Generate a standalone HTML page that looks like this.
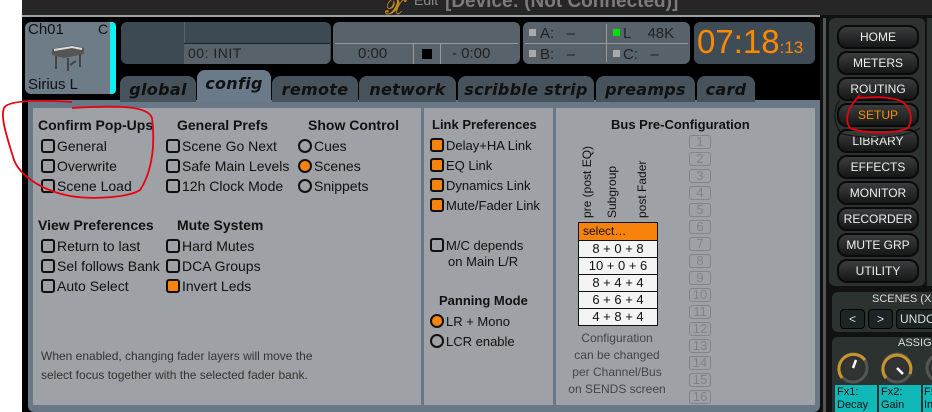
<!DOCTYPE html>
<html><head><meta charset="utf-8"><style>
*{box-sizing:border-box;margin:0;padding:0}
body{width:932px;height:412px;overflow:hidden;background:#fff;position:relative;font-family:"Liberation Sans","DejaVu Sans",sans-serif}
.a{position:absolute}
.frame{left:22px;top:0;width:806px;height:412px;background:#000}
.topbar{left:22px;top:0;width:910px;height:15px;background:#262626}
.tline{left:22px;top:15px;width:806px;height:2px;background:#9aa0a6}
.box{position:absolute;border-radius:6px}
.tab{position:absolute;top:72px;height:28px;background:#46525c;border-radius:8px 8px 0 0;font:italic bold 16px "DejaVu Sans",sans-serif;color:#111;text-align:center;line-height:28px;letter-spacing:.3px;white-space:nowrap;overflow:hidden}
.panel{left:28px;top:100px;width:792px;height:312px;background:#687886;border-radius:0 0 6px 6px}
.inner{left:33px;top:108px;width:782px;height:297px;background:#9ea1a6}
.sep{position:absolute;top:108px;width:3px;height:297px;background:#687886}
.h{position:absolute;font-weight:bold;font-size:14px;color:#111}
.it{position:absolute;font-size:14px;color:#111;white-space:nowrap}
.cb{display:inline-block;width:14px;height:14px;border:2px solid #111;border-radius:3px;vertical-align:-2px;margin-right:2px;background:transparent}
.cb.on{background:#f7830c}
.rb{display:inline-block;width:14px;height:14px;border:2px solid #111;border-radius:50%;vertical-align:-2px;margin-right:2px}
.rb.on{background:#f7830c}
.btn{position:absolute;left:837px;width:82px;height:24px;border-radius:10px;background:linear-gradient(#3a3d3d,#161818);border:2px solid #0a0a0a;color:#eee;font-size:12px;text-align:center;line-height:20px}
.num{position:absolute;left:689px;width:22px;height:14px;border:1px solid #7f8489;border-radius:3px;color:#7f8489;font-size:13px;line-height:12px;text-align:center}
.row{height:17px;border-top:1px solid #111;background:#f4f4f4;font-size:13px;text-align:center;line-height:16px;color:#111}
</style></head><body>
<div class="a frame"></div>
<div class="a topbar"></div>
<div class="a" style="left:385px;top:-6px;font-size:22px;color:#c58a1c">𝓧</div>
<div class="a" style="left:414px;top:-8px;font-size:14px;color:#8a8a8a">Edit</div>
<div class="a" style="left:445px;top:-9px;font-size:19px;font-weight:bold;color:#7c7c7c">[Device: (Not Connected)]</div>
<div class="a tline"></div>

<div class="box" style="left:25px;top:22px;width:91px;height:72px;background:#6e7c88"></div>
<div class="a" style="left:110px;top:22px;width:6px;height:72px;background:#10f0f0;border-radius:0 4px 4px 0"></div>
<div class="a" style="left:28px;top:21px;font-size:15px;color:#111">Ch01</div>
<div class="a" style="left:98px;top:21px;font-size:14px;color:#111">C</div>
<svg class="a" style="left:50px;top:41px" width="40" height="32"><path d="M2 8 L22 4 L34 7 L34 13 L14 17 L2 14Z" fill="#555"/><path d="M4 9 L22 6 L32 8" stroke="#ddd" stroke-width="2" fill="none"/><path d="M6 15 L6 28 M30 13 L30 26 M18 17 L18 30 M20 24 L26 20" stroke="#444" stroke-width="2"/></svg>
<div class="a" style="left:28px;top:76px;font-size:15px;color:#111">Sirius L</div>

<div class="box" style="left:121px;top:22px;width:210px;height:42px;background:#3d4a54"></div>
<div class="a" style="left:184px;top:22px;width:1px;height:42px;background:#58626a"></div>
<div class="a" style="left:184px;top:43px;width:146px;height:21px;background:#58626a;border-radius:0 0 6px 0;border-top:1px solid #222"></div>
<div class="a" style="left:188px;top:45px;font-size:14px;color:#222;letter-spacing:.5px">00: INIT</div>
<div class="box" style="left:333px;top:22px;width:187px;height:42px;background:#58626a"></div>
<div class="a" style="left:335px;top:43px;width:183px;height:1px;background:#999"></div>
<div class="a" style="left:413px;top:44px;width:1px;height:20px;background:#999"></div>
<div class="a" style="left:440px;top:44px;width:1px;height:20px;background:#999"></div>
<div class="a" style="left:358px;top:45px;font-size:15px;color:#222">0:00</div>
<div class="a" style="left:422px;top:49px;width:10px;height:10px;background:#000"></div>
<div class="a" style="left:452px;top:45px;font-size:15px;color:#222">- 0:00</div>
<div class="box" style="left:523px;top:22px;width:167px;height:42px;background:#58626a"></div>
<div class="a" style="left:525px;top:43px;width:163px;height:1px;background:#999"></div>
<div class="a" style="left:606px;top:24px;width:1px;height:38px;background:#999"></div>
<div class="a" style="left:529px;top:29px;width:7px;height:7px;background:#aaa"></div>
<div class="a" style="left:529px;top:50px;width:7px;height:7px;background:#aaa"></div>
<div class="a" style="left:613px;top:29px;width:7px;height:7px;background:#00e000"></div>
<div class="a" style="left:613px;top:50px;width:7px;height:7px;background:#aaa"></div>
<div class="a" style="left:540px;top:25px;font-size:15px;color:#222">A: &nbsp; –</div>
<div class="a" style="left:540px;top:46px;font-size:15px;color:#222">B: &nbsp; –</div>
<div class="a" style="left:623px;top:25px;font-size:15px;color:#222">L &nbsp;&nbsp; 48K</div>
<div class="a" style="left:623px;top:46px;font-size:15px;color:#222">C: &nbsp; –</div>
<div class="box" style="left:694px;top:22px;width:121px;height:42px;background:#3f4c56"></div>
<div class="a" style="left:697px;top:24px;font-size:33px;color:#ff8a00;line-height:36px">07:18<span style="font-size:17px">:13</span></div>

<div class="a panel"></div>
<div class="tab" style="left:120px;width:76px;top:76px;height:26px">global</div>
<div class="tab" style="left:197px;width:74px;top:70px;height:32px;background:#6a7a88;line-height:28px">config</div>
<div class="tab" style="left:272px;width:86px;top:76px;height:26px">remote</div>
<div class="tab" style="left:359px;width:97px;top:76px;height:26px">network</div>
<div class="tab" style="left:458px;width:136px;top:76px;height:26px">scribble strip</div>
<div class="tab" style="left:596px;width:99px;top:76px;height:26px">preamps</div>
<div class="tab" style="left:697px;width:58px;top:76px;height:26px">card</div>

<div class="a inner"></div>
<div class="sep" style="left:421px"></div>
<div class="sep" style="left:553px"></div>

<div class="h" style="left:38px;top:117px">Confirm Pop-Ups</div>
<div class="it" style="left:41px;top:138px"><span class="cb"></span>General</div>
<div class="it" style="left:41px;top:158px"><span class="cb"></span>Overwrite</div>
<div class="it" style="left:41px;top:178px"><span class="cb"></span>Scene Load</div>
<div class="h" style="left:177px;top:117px">General Prefs</div>
<div class="it" style="left:166px;top:138px"><span class="cb"></span>Scene Go Next</div>
<div class="it" style="left:166px;top:158px"><span class="cb"></span>Safe Main Levels</div>
<div class="it" style="left:166px;top:178px"><span class="cb"></span>12h Clock Mode</div>
<div class="h" style="left:308px;top:117px">Show Control</div>
<div class="it" style="left:298px;top:138px"><span class="rb"></span>Cues</div>
<div class="it" style="left:298px;top:158px"><span class="rb on"></span>Scenes</div>
<div class="it" style="left:298px;top:178px"><span class="rb"></span>Snippets</div>
<div class="h" style="left:38px;top:217px">View Preferences</div>
<div class="it" style="left:41px;top:238px"><span class="cb"></span>Return to last</div>
<div class="it" style="left:41px;top:258px"><span class="cb"></span>Sel follows Bank</div>
<div class="it" style="left:41px;top:278px"><span class="cb"></span>Auto Select</div>
<div class="h" style="left:177px;top:217px">Mute System</div>
<div class="it" style="left:166px;top:238px"><span class="cb"></span>Hard Mutes</div>
<div class="it" style="left:166px;top:258px"><span class="cb"></span>DCA Groups</div>
<div class="it" style="left:166px;top:278px"><span class="cb on"></span>Invert Leds</div>
<div class="a" style="left:41px;top:347px;font-size:12px;line-height:19px;color:#333">When enabled, changing fader layers will move the<br>select focus together with the selected fader bank.</div>

<div class="h" style="left:432px;top:117px;font-size:13px">Link Preferences</div>
<div class="it" style="left:430px;top:138px;font-size:13px"><span class="cb on"></span>Delay+HA Link</div>
<div class="it" style="left:430px;top:158px;font-size:13px"><span class="cb on"></span>EQ Link</div>
<div class="it" style="left:430px;top:178px;font-size:13px"><span class="cb on"></span>Dynamics Link</div>
<div class="it" style="left:430px;top:198px;font-size:13px"><span class="cb on"></span>Mute/Fader Link</div>
<div class="it" style="left:430px;top:238px;font-size:13px;line-height:16px"><span class="cb"></span>M/C depends<br>&nbsp;&nbsp;&nbsp;&nbsp;&nbsp;on Main L/R</div>
<div class="h" style="left:439px;top:293px;font-size:13px">Panning Mode</div>
<div class="it" style="left:430px;top:314px;font-size:13px"><span class="rb on"></span>LR + Mono</div>
<div class="it" style="left:430px;top:334px;font-size:13px"><span class="rb"></span>LCR enable</div>

<div class="h" style="left:611px;top:117px;font-size:13px">Bus Pre-Configuration</div>
<div class="a" style="left:580px;top:218px;transform:rotate(-90deg);transform-origin:0 0;font-size:12px;color:#111;white-space:nowrap">pre (post EQ)</div>
<div class="a" style="left:605px;top:218px;transform:rotate(-90deg);transform-origin:0 0;font-size:12px;color:#111;white-space:nowrap">Subgroup</div>
<div class="a" style="left:635px;top:218px;transform:rotate(-90deg);transform-origin:0 0;font-size:12px;color:#111;white-space:nowrap">post Fader</div>
<div class="a" style="left:578px;top:222px;width:80px;border:1px solid #111;background:#f4f4f4">
<div style="height:17px;background:#f7830c;font-size:12px;line-height:17px;padding-left:4px;color:#111">select…</div>
<div class="row">8 + 0 + 8</div><div class="row">10 + 0 + 6</div><div class="row">8 + 4 + 4</div><div class="row">6 + 6 + 4</div><div class="row">4 + 8 + 4</div>
</div>
<div class="a" style="left:557px;top:330px;width:120px;text-align:center;font-size:12px;line-height:17px;color:#444">Configuration<br>can be changed<br>per Channel/Bus<br>on SENDS screen</div>
<div class="num" style="top:135px">1</div><div class="num" style="top:152px">2</div><div class="num" style="top:169px">3</div><div class="num" style="top:186px">4</div><div class="num" style="top:203px">5</div><div class="num" style="top:220px">6</div><div class="num" style="top:237px">7</div><div class="num" style="top:254px">8</div><div class="num" style="top:271px">9</div><div class="num" style="top:288px">10</div><div class="num" style="top:305px">11</div><div class="num" style="top:322px">12</div><div class="num" style="top:339px">13</div><div class="num" style="top:356px">14</div><div class="num" style="top:373px">15</div><div class="num" style="top:390px">16</div>

<div class="a" style="left:820px;top:15px;width:112px;height:397px;background:#111"></div>
<div class="a" style="left:823px;top:18px;width:3px;height:394px;background:#555"></div>
<div class="a" style="left:829px;top:18px;width:96px;height:268px;background:#2c3230;border-radius:6px"></div>
<div class="a" style="left:927px;top:18px;width:5px;height:268px;background:#2c3230"></div>
<div class="btn" style="top:25px">HOME</div>
<div class="btn" style="top:51px">METERS</div>
<div class="btn" style="top:77px">ROUTING</div>
<div class="btn" style="top:103px;color:#ff8c00">SETUP</div>
<div class="btn" style="top:129px">LIBRARY</div>
<div class="btn" style="top:155px">EFFECTS</div>
<div class="btn" style="top:181px">MONITOR</div>
<div class="btn" style="top:207px">RECORDER</div>
<div class="btn" style="top:233px">MUTE GRP</div>
<div class="btn" style="top:259px">UTILITY</div>
<div class="a" style="left:832px;top:292px;width:100px;height:40px;background:#2c3230;border-radius:6px 0 0 6px"></div>
<div class="a" style="left:872px;top:293px;font-size:11px;color:#ddd;white-space:nowrap">SCENES (X3</div>
<div class="a" style="left:840px;top:309px;width:25px;height:20px;background:#1c2426;border:1px solid #000;border-radius:4px;color:#ddd;text-align:center;font-size:12px;line-height:18px">&lt;</div>
<div class="a" style="left:868px;top:309px;width:25px;height:20px;background:#1c2426;border:1px solid #000;border-radius:4px;color:#ddd;text-align:center;font-size:12px;line-height:18px">&gt;</div>
<div class="a" style="left:896px;top:309px;width:40px;height:20px;background:#1c2426;border:1px solid #000;border-radius:4px;color:#ddd;font-size:12px;line-height:18px;padding-left:3px">UNDO</div>
<div class="a" style="left:832px;top:337px;width:100px;height:75px;background:#2c3230;border-radius:6px 0 0 0"></div>
<div class="a" style="left:898px;top:337px;font-size:11px;color:#ddd">ASSIGI</div>
<svg class="a" style="left:835px;top:350px" width="97" height="36">
<g><circle cx="18" cy="18" r="14" fill="none" stroke="#555" stroke-width="3"/><path d="M7 28 A14 14 0 1 1 30 10" fill="none" stroke="#c8952a" stroke-width="3"/><circle cx="18" cy="18" r="10" fill="#333"/><path d="M18 18 L21 10" stroke="#fff" stroke-width="2.5"/></g>
<g transform="translate(44,0)"><circle cx="18" cy="18" r="14" fill="none" stroke="#555" stroke-width="3"/><path d="M7 28 A14 14 0 1 1 31 24" fill="none" stroke="#c8952a" stroke-width="3"/><circle cx="18" cy="18" r="10" fill="#333"/><path d="M18 18 L24 24" stroke="#fff" stroke-width="2.5"/></g>
<g transform="translate(88,0)"><circle cx="18" cy="18" r="14" fill="none" stroke="#555" stroke-width="3"/></g>
</svg>
<div class="a" style="left:835px;top:385px;width:42px;height:27px;background:#10b8b8;font-size:11px;line-height:13px;color:#111;padding:1px 2px">Fx1:<br>Decay</div>
<div class="a" style="left:879px;top:385px;width:42px;height:27px;background:#10b8b8;font-size:11px;line-height:13px;color:#111;padding:1px 2px">Fx2:<br>Gain</div>
<div class="a" style="left:923px;top:385px;width:9px;height:27px;background:#10b8b8;font-size:11px;line-height:13px;color:#111;padding:1px 1px;overflow:hidden">Fx<br>In</div>

<svg class="a" style="left:0;top:0" width="932" height="412">
<path d="M72 102 C40 100 8 100 4 108 C0 118 8 140 14 160 C20 175 40 190 70 196 C95 200 130 197 140 190 C150 175 156 150 152 118 C148 106 120 105 72 108" fill="none" stroke="#e8000e" stroke-width="1.8"/>
<path d="M860 95 C850 105 843 118 850 128 C865 134 895 134 908 128 C914 118 910 104 898 100 C885 96 872 97 858 98" fill="none" stroke="#e8000e" stroke-width="1.8"/>
<path d="M840 100 C833 108 833 125 842 134 C870 140 905 138 920 128" fill="none" stroke="#111" stroke-width="1"/>
</svg>
</body></html>
